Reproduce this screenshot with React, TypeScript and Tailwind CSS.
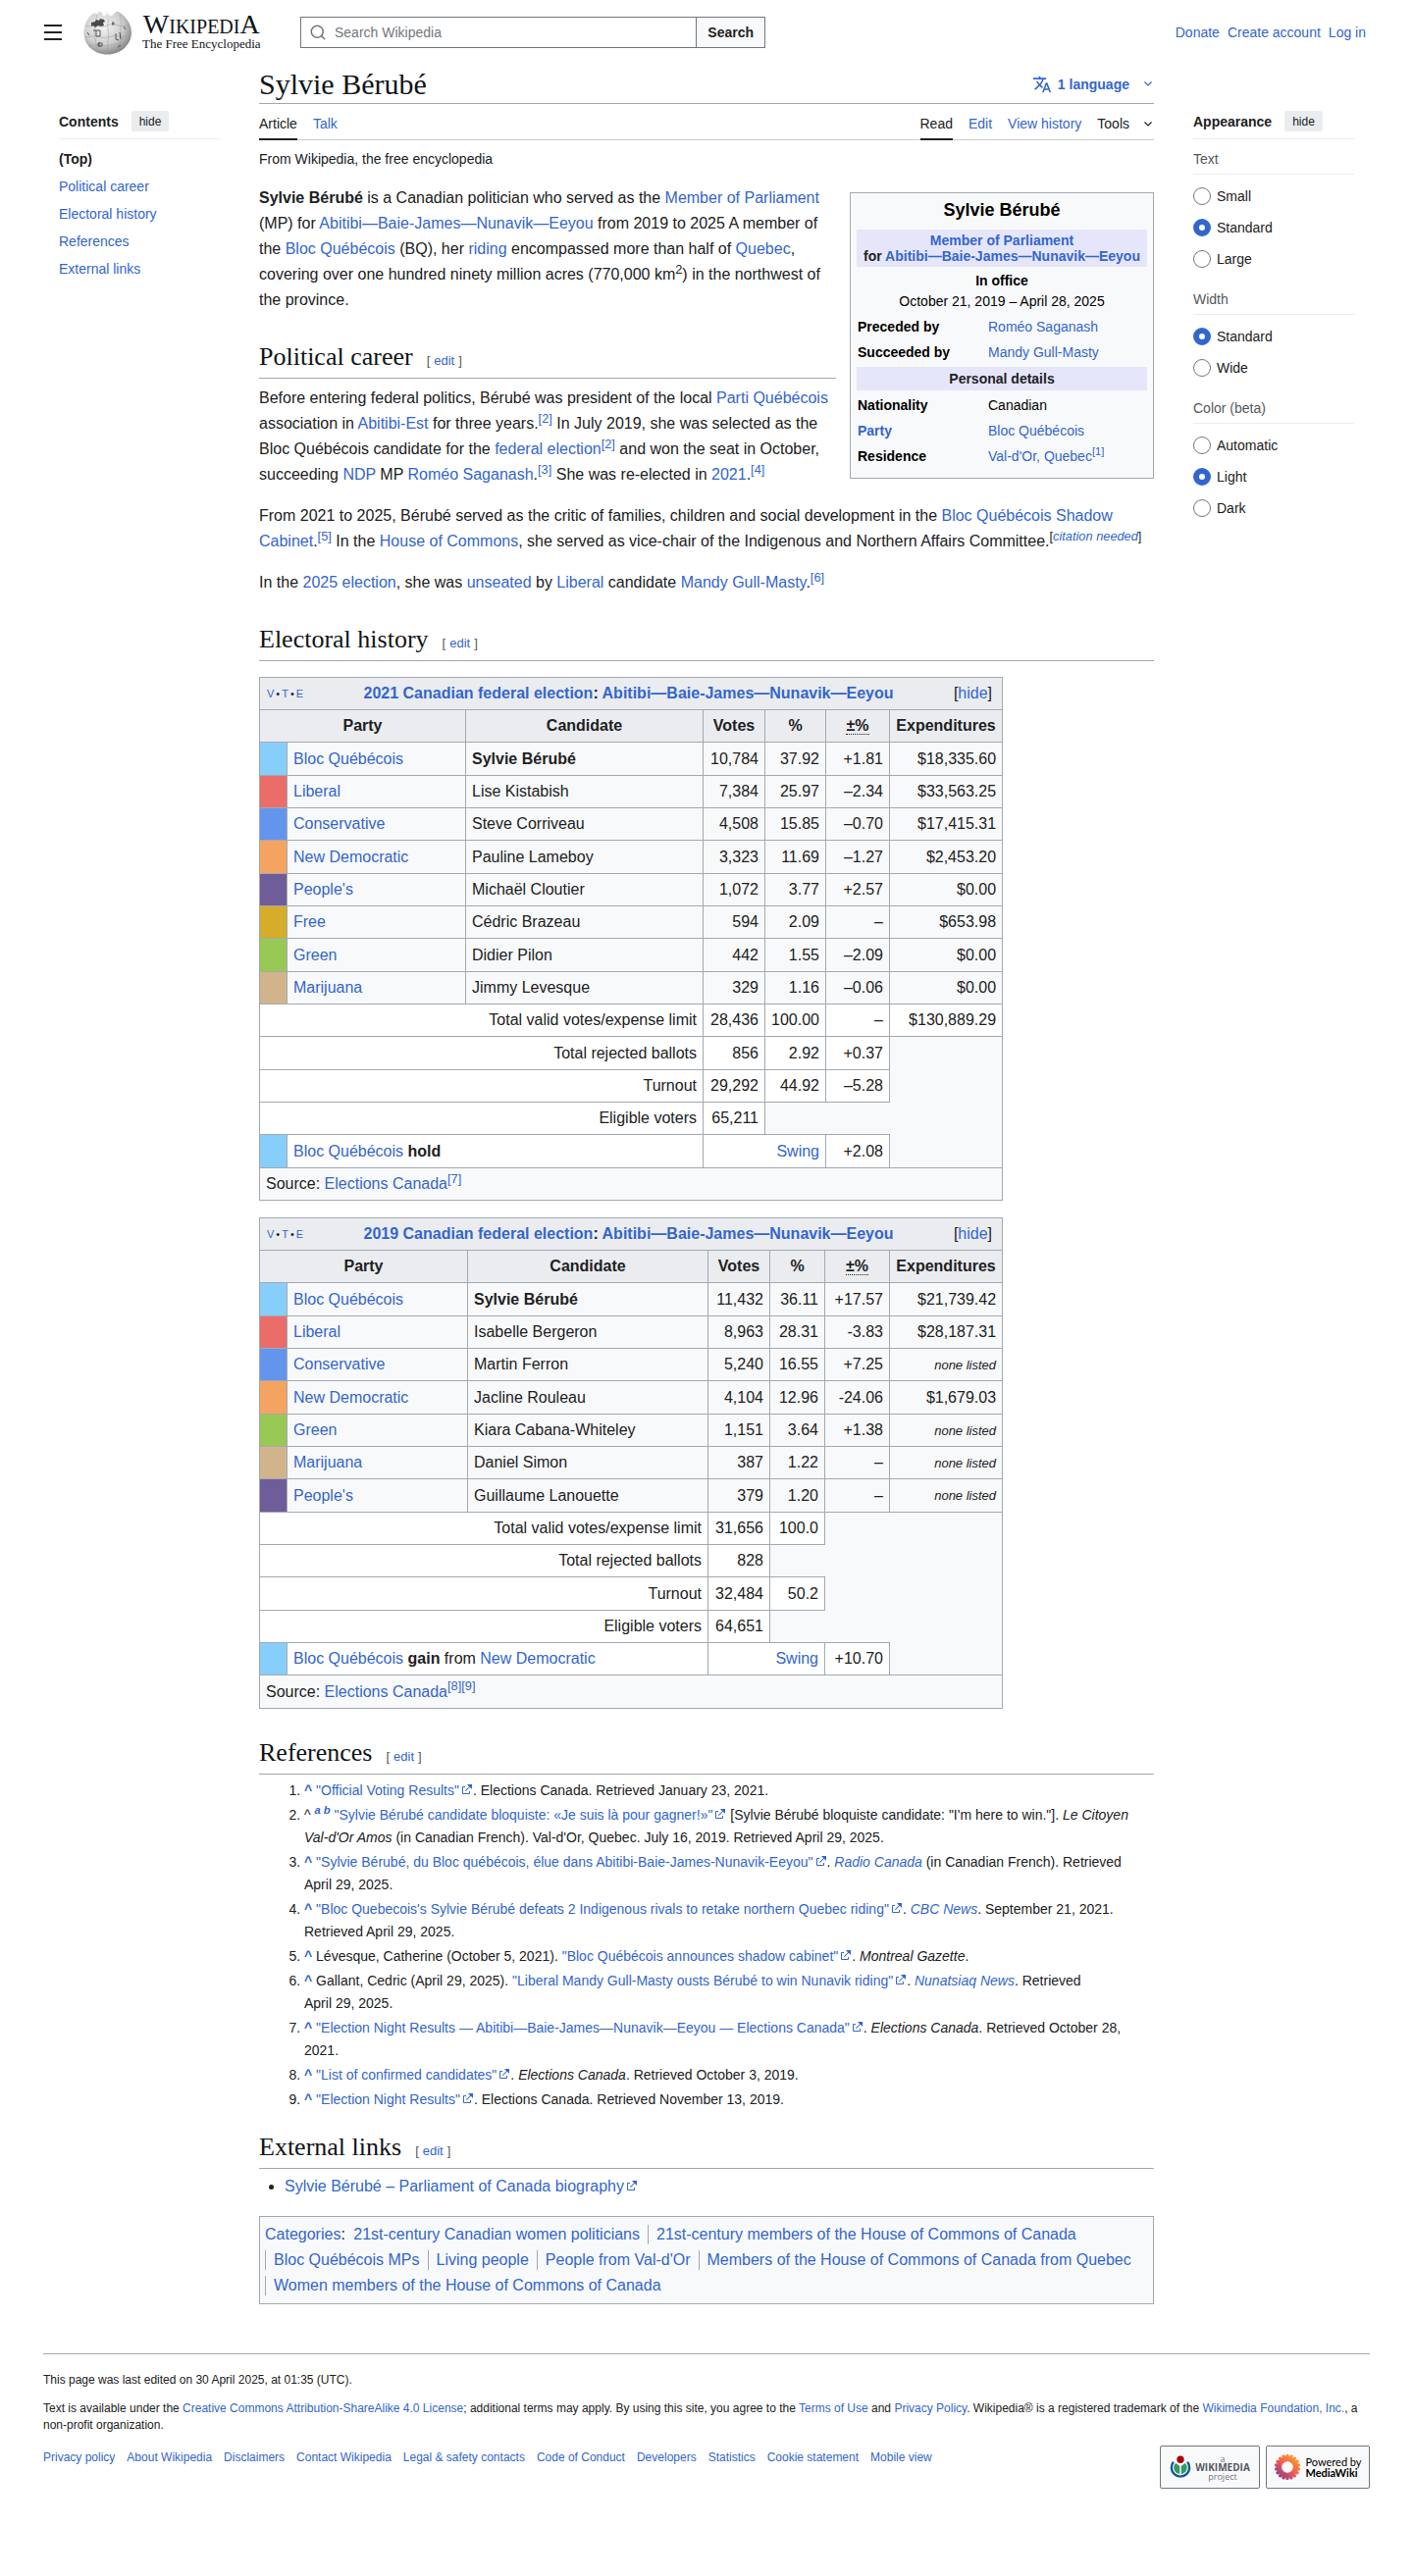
import type { ReactNode } from "react"
import { Search } from "lucide-react"
import { MdTranslate } from "react-icons/md"

type Row = {
  color: string
  party: string
  candidate: string
  votes: string
  pct: string
  change: string
  spent: string
}

type Summary = { label: string; votes: string; pct?: string; change?: string; spent?: string }

const results2021: Row[] = [
  { color: "bg-[#87cefa]", party: "Bloc Québécois", candidate: "Sylvie Bérubé", votes: "10,784", pct: "37.92", change: "+1.81", spent: "$18,335.60" },
  { color: "bg-[#ea6d6a]", party: "Liberal", candidate: "Lise Kistabish", votes: "7,384", pct: "25.97", change: "–2.34", spent: "$33,563.25" },
  { color: "bg-[#6495ed]", party: "Conservative", candidate: "Steve Corriveau", votes: "4,508", pct: "15.85", change: "–0.70", spent: "$17,415.31" },
  { color: "bg-[#f4a460]", party: "New Democratic", candidate: "Pauline Lameboy", votes: "3,323", pct: "11.69", change: "–1.27", spent: "$2,453.20" },
  { color: "bg-[#6f5d9a]", party: "People's", candidate: "Michaël Cloutier", votes: "1,072", pct: "3.77", change: "+2.57", spent: "$0.00" },
  { color: "bg-[#d6ac2b]", party: "Free", candidate: "Cédric Brazeau", votes: "594", pct: "2.09", change: "–", spent: "$653.98" },
  { color: "bg-[#99c955]", party: "Green", candidate: "Didier Pilon", votes: "442", pct: "1.55", change: "–2.09", spent: "$0.00" },
  { color: "bg-[#d2b48c]", party: "Marijuana", candidate: "Jimmy Levesque", votes: "329", pct: "1.16", change: "–0.06", spent: "$0.00" },
]

const summary2021: Summary[] = [
  { label: "Total valid votes/expense limit", votes: "28,436", pct: "100.00", change: "–", spent: "$130,889.29" },
  { label: "Total rejected ballots", votes: "856", pct: "2.92", change: "+0.37" },
  { label: "Turnout", votes: "29,292", pct: "44.92", change: "–5.28" },
  { label: "Eligible voters", votes: "65,211" },
]

const results2019: Row[] = [
  { color: "bg-[#87cefa]", party: "Bloc Québécois", candidate: "Sylvie Bérubé", votes: "11,432", pct: "36.11", change: "+17.57", spent: "$21,739.42" },
  { color: "bg-[#ea6d6a]", party: "Liberal", candidate: "Isabelle Bergeron", votes: "8,963", pct: "28.31", change: "-3.83", spent: "$28,187.31" },
  { color: "bg-[#6495ed]", party: "Conservative", candidate: "Martin Ferron", votes: "5,240", pct: "16.55", change: "+7.25", spent: "none listed" },
  { color: "bg-[#f4a460]", party: "New Democratic", candidate: "Jacline Rouleau", votes: "4,104", pct: "12.96", change: "-24.06", spent: "$1,679.03" },
  { color: "bg-[#99c955]", party: "Green", candidate: "Kiara Cabana-Whiteley", votes: "1,151", pct: "3.64", change: "+1.38", spent: "none listed" },
  { color: "bg-[#d2b48c]", party: "Marijuana", candidate: "Daniel Simon", votes: "387", pct: "1.22", change: "–", spent: "none listed" },
  { color: "bg-[#6f5d9a]", party: "People's", candidate: "Guillaume Lanouette", votes: "379", pct: "1.20", change: "–", spent: "none listed" },
]

const summary2019: Summary[] = [
  { label: "Total valid votes/expense limit", votes: "31,656", pct: "100.0" },
  { label: "Total rejected ballots", votes: "828" },
  { label: "Turnout", votes: "32,484", pct: "50.2" },
  { label: "Eligible voters", votes: "64,651" },
]

const categories = [
  "21st-century Canadian women politicians",
  "21st-century members of the House of Commons of Canada",
  "Bloc Québécois MPs",
  "Living people",
  "People from Val-d'Or",
  "Members of the House of Commons of Canada from Quebec",
  "Women members of the House of Commons of Canada",
]

const footerLinks = [
  "Privacy policy", "About Wikipedia", "Disclaimers", "Contact Wikipedia", "Legal & safety contacts",
  "Code of Conduct", "Developers", "Statistics", "Cookie statement", "Mobile view",
]

const appearance = [
  { title: "Text", name: "text", options: ["Small", "Standard", "Large"], value: "Standard" },
  { title: "Width", name: "width", options: ["Standard", "Wide"], value: "Standard" },
  { title: "Color (beta)", name: "color", options: ["Automatic", "Light", "Dark"], value: "Light" },
]

function A({ children, className = "" }: { children: ReactNode; className?: string }) {
  return <a href="#" className={`text-[#3366cc] hover:underline ${className}`}>{children}</a>
}

function Ref({ n }: { n: number | string }) {
  return (
    <sup className="align-super text-[80%] leading-none top-0">
      <A>[{n}]</A>
    </sup>
  )
}

function ExternalIcon() {
  return (
    <svg viewBox="0 0 12 12" className="inline-block size-3 ml-0.5 align-baseline fill-[#3366cc]" aria-hidden="true">
      <path d="M6 1h5v5L8.86 3.85 4.7 8 4 7.3l4.15-4.16zM2 3h2v1H2v6h6V8h1v2a1 1 0 0 1-1 1H2a1 1 0 0 1-1-1V4a1 1 0 0 1 1-1" />
    </svg>
  )
}

function Ext({ children }: { children: ReactNode }) {
  return <A>{children}<ExternalIcon /></A>
}

function Back() {
  return <A className="font-bold">^</A>
}

function Chevron({ className = "" }: { className?: string }) {
  return (
    <svg viewBox="0 0 8 5" className={`w-2 h-[5px] fill-none stroke-current ${className}`} aria-hidden="true">
      <path d="M0.5 0.5 4 4 7.5 0.5" strokeWidth="1.2" />
    </svg>
  )
}

function Heading({ children, className = "mt-[27px]" }: { children: ReactNode; className?: string }) {
  return (
    <div className={`flow-root ${className}`}>
      <div className="flex items-baseline gap-[14px] pb-[3px] border-b border-[#a2a9b1]">
        <h2 className="font-['Liberation_Serif',serif] text-[26px] leading-9 text-[#101418]">{children}</h2>
        <span className="flex gap-1 text-[13px] text-[#54595d]">[<A>edit</A>]</span>
      </div>
    </div>
  )
}

function Logo() {
  return (
    <a href="#" className="flex items-center gap-[10px]" aria-label="Wikipedia">
      <svg viewBox="0 0 50 46" className="w-[50px] h-[46px]" aria-hidden="true">
        <defs>
          <radialGradient id="globe" cx="0.4" cy="0.35" r="0.75">
            <stop offset="0" stopColor="#f4f4f4" />
            <stop offset="0.55" stopColor="#cfcfcf" />
            <stop offset="1" stopColor="#6d6d6d" />
          </radialGradient>
        </defs>
        <path
          fill="url(#globe)"
          d="M8 5.5 11 3l3 1.5 2-2.5 3 1 1 3 3-.5 1-3 2 3 3 .5 3-3 2.500-1.500 3 1.500C43 7 49 14 49 23c0 12.500-11 22.500-24.500 22.500S.5 36 .5 23.500C.5 16 3 9.500 8 5.500z"
        />
        <g fill="none" stroke="#9b9b9b" strokeWidth="0.5">
          <path d="M3 16c4 2 7-1 11 0s6 2 10 0 8-1 12 0 7 1 11-1" />
          <path d="M1 27c5 2 8-1 13 0s7 2 11 1 8-2 12-1 7 1 11-1" />
          <path d="M5 36c5 1 8-1 12 0s6 1 10 0 8-1 11 0 4 0 6-1" />
          <path d="M14 5c-2 5-1 8-2 12s-1 8 0 13 1 8 3 13" />
          <path d="M25 9c1 4-1 7 0 11s1 7 0 12 0 8 0 13" />
          <path d="M37 5c1 5 2 8 1 12s1 8 0 13-1 7-3 11" />
        </g>
        <path fill="#4a4a4a" d="M8 13l4-1 1-2 3 1 1-2 4 1 1 2-2 1 1 3-3 1-3-1-3 2-2-2-2 1z" />
        <g fill="none" stroke="#555" strokeWidth="1">
          <path d="M12 21h5v6h-4v-6M10 21h2" />
          <path d="M33 24v6l3 1M37 23l1 7" />
          <path d="M15 34h4v3h-4zM16 33v5" />
          <path d="M29 14h3M30 12v4M41 17l2 3M4 23l2 3" />
          <path d="M35 38l3-2" />
        </g>
      </svg>
      <span className="flex flex-col items-center font-['Liberation_Serif',serif] text-[#101418]">
        <span className="text-[28px] leading-[21px]">W<span className="text-[20px]">IKIPEDI</span>A</span>
        <span className="text-[13px] leading-[14px]">The Free Encyclopedia</span>
      </span>
    </a>
  )
}

function Header() {
  return (
    <header className="flex items-center h-[66px] px-11 text-sm">
      <button aria-label="Main menu" className="flex flex-col gap-[5px] w-5 px-px">
        <span className="h-0.5 bg-[#202122]" />
        <span className="h-0.5 bg-[#202122]" />
        <span className="h-0.5 bg-[#202122]" />
      </button>
      <div className="w-[242px] pl-[21px]">
        <Logo />
      </div>
      <form className="flex w-[474px] h-8" onSubmit={(e) => e.preventDefault()}>
        <label className="flex flex-1 items-center gap-2 pl-2 border border-[#72777d]">
          <Search className="size-[18px] text-[#72777d]" strokeWidth={2} />
          <input type="search" aria-label="Search Wikipedia" placeholder="Search Wikipedia" className="flex-1 outline-none placeholder:text-[#72777d]" />
        </label>
        <button className="-ml-px px-[11px] border border-[#72777d] bg-[#f8f9fa] font-bold">Search</button>
      </form>
      <nav className="flex gap-2 ml-auto pr-1">
        <A>Donate</A>
        <A>Create account</A>
        <A>Log in</A>
      </nav>
    </header>
  )
}

function PanelTitle({ children }: { children: ReactNode }) {
  return (
    <div className="flex items-center gap-[13px] h-9 border-b border-[#eaecf0]">
      <h2 className="font-bold">{children}</h2>
      <button className="h-[21px] px-2 rounded-xs bg-[#eaecf0] text-xs">hide</button>
    </div>
  )
}

function Contents() {
  return (
    <nav className="pt-10 pl-4 text-sm">
      <PanelTitle>Contents</PanelTitle>
      <ul className="pt-[6px] leading-7">
        <li><a href="#" className="font-bold">(Top)</a></li>
        <li><A>Political career</A></li>
        <li><A>Electoral history</A></li>
        <li><A>References</A></li>
        <li><A>External links</A></li>
      </ul>
    </nav>
  )
}

function Appearance() {
  return (
    <aside className="pt-10 pr-4 text-sm">
      <PanelTitle>Appearance</PanelTitle>
      {appearance.map((group) => (
        <div key={group.name} role="radiogroup" aria-labelledby={`${group.name}-title`} className="pt-[9px] pb-[5px]">
          <h3 id={`${group.name}-title`} className="pb-1 border-b border-[#eaecf0] leading-[22px] text-[#54595d]">{group.title}</h3>
          <div className="pt-[6px]">
            {group.options.map((option) => (
              <label key={option} className="flex items-center gap-[6px] h-8">
                <input
                  type="radio"
                  name={group.name}
                  defaultChecked={option === group.value}
                  className="appearance-none size-[18px] rounded-full border border-[#72777d] bg-white checked:border-[6px] checked:border-[#3366cc]"
                />
                {option}
              </label>
            ))}
          </div>
        </div>
      ))}
    </aside>
  )
}

function Infobox() {
  const label = "w-[134px] pl-[1px] text-left font-bold"
  return (
    <div className="float-right w-[310px] mt-[7px] ml-[14px] mb-[7px] px-[6px] pt-[6px] pb-[9px] border border-[#a2a9b1] bg-[#f8f9fa] text-sm leading-[26px] text-black">
      <table className="w-full">
        <tbody>
          <tr><th colSpan={2} className="pb-[9px] text-lg leading-[22px]">Sylvie Bérubé</th></tr>
          <tr>
            <th colSpan={2} className="py-[3px] bg-[#e6e6fa] leading-4 text-[#202122]">
              <A>Member of Parliament</A><br />for <A>Abitibi—Baie-James—Nunavik—Eeyou</A>
            </th>
          </tr>
          <tr>
            <td colSpan={2} className="pt-1 pb-0.5 text-center leading-[21px]">
              <b>In office</b><br />October 21, 2019 – April 28, 2025
            </td>
          </tr>
          <tr><th className={label}>Preceded by</th><td><A>Roméo Saganash</A></td></tr>
          <tr><th className={label}>Succeeded by</th><td><A>Mandy Gull-Masty</A></td></tr>
          <tr>
            <th colSpan={2} className="py-0.5">
              <div className="bg-[#e6e6fa] leading-6 text-[#202122]">Personal details</div>
            </th>
          </tr>
          <tr><th className={label}>Nationality</th><td>Canadian</td></tr>
          <tr><th className={label}><A>Party</A></th><td><A>Bloc Québécois</A></td></tr>
          <tr><th className={label}>Residence</th><td><A>Val-d'Or, Quebec</A><Ref n={1} /></td></tr>
        </tbody>
      </table>
    </div>
  )
}

type ElectionProps = {
  year: string
  cols: string[]
  rows: Row[]
  summary: Summary[]
  outcome: ReactNode
  swing: string
  sources: number[]
}

function ElectionTable({ year, cols, rows, summary, outcome, swing, sources }: ElectionProps) {
  const cell = "px-[6px] border border-[#a2a9b1]"
  const num = `${cell} text-right`
  return (
    <table className="table-fixed border-collapse w-full max-w-[758px] border border-[#a2a9b1] bg-[#f8f9fa] leading-[26px] [&_tr]:h-[33px] [&_tr:nth-child(3n)]:h-[34px]">
      <colgroup>
        {cols.map((c, i) => <col key={i} className={c} />)}
      </colgroup>
      <tbody>
        <tr className="bg-[#eaecf0]">
          <th colSpan={7} className={cell}>
            <div className="flex items-center">
              <span className="flex items-center gap-0.5 pl-px text-[11px] leading-4 font-normal">
                <A>V</A><span>•</span><A>T</A><span>•</span><A>E</A>
              </span>
              <span className="flex-1 text-center">
                <A>{year} Canadian federal election</A>: <A>Abitibi—Baie-James—Nunavik—Eeyou</A>
              </span>
              <span className="pr-1 font-normal">[<button className="text-[#3366cc]">hide</button>]</span>
            </div>
          </th>
        </tr>
        <tr className="bg-[#eaecf0]">
          <th colSpan={2} className={cell}>Party</th>
          <th className={cell}>Candidate</th>
          <th className={cell}>Votes</th>
          <th className={cell}>%</th>
          <th className={cell}><abbr title="Change" className="no-underline border-b border-dotted border-[#202122]">±%</abbr></th>
          <th className={cell}>Expenditures</th>
        </tr>
        {rows.map((r, i) => (
          <tr key={r.party}>
            <td className={`border border-[#a2a9b1] ${r.color}`} />
            <td className={cell}><A>{r.party}</A></td>
            <td className={cell}>{i === 0 ? <b>{r.candidate}</b> : r.candidate}</td>
            <td className={num}>{r.votes}</td>
            <td className={num}>{r.pct}</td>
            <td className={num}>{r.change}</td>
            <td className={num}>{r.spent.startsWith("$") ? r.spent : <i className="text-[13px]">{r.spent}</i>}</td>
          </tr>
        ))}
        {summary.map((s) => (
          <tr key={s.label}>
            <td colSpan={3} className={`${num} bg-white`}>{s.label}</td>
            <td className={`${num} bg-white`}>{s.votes}</td>
            {s.pct && <td className={`${num} bg-white`}>{s.pct}</td>}
            {s.change && <td className={`${num} bg-white`}>{s.change}</td>}
            {s.spent && <td className={`${num} bg-white`}>{s.spent}</td>}
          </tr>
        ))}
        <tr>
          <td className="border border-[#a2a9b1] bg-[#87cefa]" />
          <td colSpan={2} className={`${cell} bg-white`}>{outcome}</td>
          <td colSpan={2} className={`${num} bg-white`}><A>Swing</A></td>
          <td className={`${num} bg-white`}>{swing}</td>
        </tr>
        <tr>
          <td colSpan={7} className={cell}>
            Source: <A>Elections Canada</A>{sources.map((n) => <Ref key={n} n={n} />)}
          </td>
        </tr>
      </tbody>
    </table>
  )
}

function References() {
  return (
    <ol className="list-decimal pt-[5px] pl-[46px] text-sm leading-[23px] [&>li]:mb-0.5">
      <li><Back /> <Ext>"Official Voting Results"</Ext>. Elections Canada. Retrieved January 23, 2021.</li>
      <li>
        ^ <sup className="text-[80%] leading-none font-bold italic"><A>a</A> <A>b</A></sup> <Ext>"Sylvie Bérubé candidate bloquiste: «Je suis là pour gagner!»"</Ext> [Sylvie Bérubé bloquiste candidate: "I'm here to win."]. <i>Le Citoyen <span className="whitespace-nowrap">Val-d'Or Amos</span></i> (in Canadian French). Val-d'Or, Quebec. July 16, 2019. Retrieved April 29, 2025.
      </li>
      <li>
        <Back /> <Ext>"Sylvie Bérubé, du Bloc québécois, élue dans Abitibi-Baie-James-Nunavik-Eeyou"</Ext>. <i><A>Radio Canada</A></i> (in Canadian French). Retrieved <span className="whitespace-nowrap">April 29, 2025.</span>
      </li>
      <li>
        <Back /> <Ext>"Bloc Quebecois's Sylvie Bérubé defeats 2 Indigenous rivals to retake northern Quebec riding"</Ext>. <i><A>CBC News</A></i>. September 21, 2021. Retrieved April 29, 2025.
      </li>
      <li><Back /> Lévesque, Catherine (October 5, 2021). <Ext>"Bloc Québécois announces shadow cabinet"</Ext>. <i>Montreal Gazette</i>.</li>
      <li>
        <Back /> Gallant, Cedric (April 29, 2025). <Ext>"Liberal Mandy Gull-Masty ousts Bérubé to win Nunavik riding"</Ext>. <i><A>Nunatsiaq News</A></i>. Retrieved <span className="whitespace-nowrap">April 29, 2025.</span>
      </li>
      <li>
        <Back /> <Ext>"Election Night Results — Abitibi—Baie-James—Nunavik—Eeyou — Elections Canada"</Ext>. <i>Elections Canada</i>. Retrieved October 28,<br />2021.
      </li>
      <li><Back /> <Ext>"List of confirmed candidates"</Ext>. <i>Elections Canada</i>. Retrieved October 3, 2019.</li>
      <li><Back /> <Ext>"Election Night Results"</Ext>. Elections Canada. Retrieved November 13, 2019.</li>
    </ol>
  )
}

function Article() {
  return (
    <main className="min-w-0">
      <div className="flex items-center justify-between h-10 border-b border-[#a2a9b1]">
        <h1 className="font-['Liberation_Serif',serif] text-[30px] leading-[38px] text-[#101418]">Sylvie Bérubé</h1>
        <button className="flex items-center pr-0.5 text-sm font-bold text-[#3366cc]">
          <MdTranslate className="size-5 mr-[6px]" />
          1 language
          <Chevron className="ml-[15px]" />
        </button>
      </div>
      <div className="flex justify-between border-b border-[#c8ccd1] text-sm leading-[22px]">
        <nav className="flex gap-4 -mb-px">
          <a href="#" className="pt-[9px] pb-1 border-b-2 border-[#202122]">Article</a>
          <A className="pt-[9px]">Talk</A>
        </nav>
        <nav className="flex gap-4 -mb-px">
          <a href="#" className="pt-[9px] pb-1 border-b-2 border-[#202122]">Read</a>
          <A className="pt-[9px]">Edit</A>
          <A className="pt-[9px]">View history</A>
          <button className="flex items-center gap-[15px] pt-[3px] pr-0.5">Tools<Chevron /></button>
        </nav>
      </div>
      <p className="pt-2 text-sm leading-[22px]">From Wikipedia, the free encyclopedia</p>

      <div className="pt-4 leading-[26px]">
        <Infobox />
        <p>
          <b>Sylvie Bérubé</b> is a Canadian politician who served as the <A>Member of Parliament</A> (MP) for <A>Abitibi—Baie-James—Nunavik—Eeyou</A> from 2019 to 2025 A member of the <A>Bloc Québécois</A> (BQ), her <A>riding</A> encompassed more than half of <A>Quebec</A>, covering over one hundred ninety million acres (770,000 km<sup className="text-[80%] leading-none">2</sup>) in the northwest of the province.
        </p>
        <Heading>Political career</Heading>
        <p className="mt-[7px]">
          Before entering federal politics, Bérubé was president of the local <A>Parti Québécois</A> association in <A>Abitibi-Est</A> for three years.<Ref n={2} /> In July 2019, she was selected as the Bloc Québécois candidate for the <A>federal election</A><Ref n={2} /> and won the seat in October, succeeding <A>NDP</A> MP <A>Roméo Saganash</A>.<Ref n={3} /> She was re-elected in <A>2021</A>.<Ref n={4} />
        </p>
        <p className="mt-4">
          From 2021 to 2025, Bérubé served as the critic of families, children and social development in the <A>Bloc Québécois Shadow Cabinet</A>.<Ref n={5} /> In the <A>House of Commons</A>, she served as vice-chair of the Indigenous and Northern Affairs Committee.<sup className="text-[80%] leading-none whitespace-nowrap">[<i><A>citation needed</A></i>]</sup>
        </p>
        <p className="mt-4">
          In the <A>2025 election</A>, she was <A>unseated</A> by <A>Liberal</A> candidate <A>Mandy Gull-Masty</A>.<Ref n={6} />
        </p>

        <Heading>Electoral history</Heading>
        <div className="flex flex-col gap-[17px] pt-4">
          <ElectionTable
            year="2021"
            cols={["w-[28px]", "w-[182px]", "w-[242px]", "w-[63px]", "w-[62px]", "w-[65px]", "w-[115px]"]}
            rows={results2021}
            summary={summary2021}
            outcome={<><A>Bloc Québécois</A> <b>hold</b></>}
            swing="+2.08"
            sources={[7]}
          />
          <ElectionTable
            year="2019"
            cols={["w-[28px]", "w-[184px]", "w-[245px]", "w-[63px]", "w-[56px]", "w-[66px]", "w-[115px]"]}
            rows={results2019}
            summary={summary2019}
            outcome={<><A>Bloc Québécois</A> <b>gain</b> from <A>New Democratic</A></>}
            swing="+10.70"
            sources={[8, 9]}
          />
        </div>

        <Heading>References</Heading>
        <References />

        <Heading className="mt-[19px]">External links</Heading>
        <ul className="list-disc pt-[5px] pl-[26px]">
          <li><Ext>Sylvie Bérubé – Parliament of Canada biography</Ext></li>
        </ul>

        <div className="mt-[17px] p-[5px] border border-[#a2a9b1] bg-[#f8f9fa]">
          <A>Categories</A>:{" "}
          <ul className="inline">
            {categories.map((c, i) => (
              <li key={c} className={`inline-block leading-5 pr-2 ${i === 0 ? "pl-1" : "pl-2 border-l border-[#a2a9b1]"}`}><A>{c}</A></li>
            ))}
          </ul>
        </div>
      </div>
    </main>
  )
}

function WikimediaBadge() {
  return (
    <a href="#" className="flex items-center justify-center gap-1 w-[102px] h-11 rounded-xs border border-[#72777d] bg-[#f8f9fa]">
      <svg viewBox="0 0 24 26" className="w-[22px] h-6" aria-hidden="true">
        <circle cx="12" cy="4.500" r="4" fill="#a00" />
        <path d="M4.200 7.200a10 10 0 1 0 15.600 0" fill="none" stroke="#0c5a8f" strokeWidth="2.600" />
        <path d="M11.200 20.500V12L6.800 8.500a7 7 0 0 0 4.400 12zM12.800 20.500V12l4.400-3.500a7 7 0 0 1-4.400 12z" fill="#396" />
      </svg>
      <span className="flex flex-col items-center font-['Open_Sans',sans-serif] text-[9px] leading-[9px] text-[#72777d]">
        <span>a</span>
        <span className="text-[10px] font-bold text-[#54595d]">WIKIMEDIA</span>
        <span>project</span>
      </span>
    </a>
  )
}

function MediaWikiBadge() {
  const petals = Array.from({ length: 18 }, (_, i) => i * 20)
  return (
    <a href="#" className="flex items-center justify-center gap-1 w-[106px] h-11 rounded-xs border border-[#72777d] bg-[#f8f9fa]">
      <svg viewBox="0 0 28 28" className="size-7" aria-hidden="true">
        <defs>
          <linearGradient id="petal" x1="22" y1="4" x2="5" y2="24" gradientUnits="userSpaceOnUse">
            <stop offset="0" stopColor="#fc9a2b" />
            <stop offset="0.5" stopColor="#f25b50" />
            <stop offset="1" stopColor="#8d3a90" />
          </linearGradient>
          <mask id="petals">
            <circle cx="14" cy="14" r="11" fill="#fff" />
            {petals.map((a) => <circle key={a} cx="14" cy="2.500" r="1.700" fill="#fff" transform={`rotate(${a} 14 14)`} />)}
            <circle cx="14" cy="14" r="5.800" fill="#000" />
          </mask>
        </defs>
        <rect width="28" height="28" fill="url(#petal)" mask="url(#petals)" />
      </svg>
      <span className="font-[Lato,sans-serif] text-[11px] leading-[11px] text-black">
        Powered by<br /><b>MediaWiki</b>
      </span>
    </a>
  )
}

function Footer() {
  return (
    <footer className="mx-11 mt-[50px] pt-[18px] pb-20 border-t border-[#a2a9b1] text-xs leading-[17px]">
      <p>This page was last edited on 30 April 2025, at 01:35 (UTC).</p>
      <p className="mt-3">
        Text is available under the <A>Creative Commons Attribution-ShareAlike 4.0 License</A>; additional terms may apply. By using this site, you agree to the <A>Terms of Use</A> and <A>Privacy Policy</A>. Wikipedia® is a registered trademark of the <A>Wikimedia Foundation, Inc.</A>, a non-profit organization.
      </p>
      <div className="flex items-start justify-between mt-3">
        <ul className="flex flex-wrap gap-x-3 pt-1">
          {footerLinks.map((l) => <li key={l}><A>{l}</A></li>)}
        </ul>
        <div className="flex gap-[6px]">
          <WikimediaBadge />
          <MediaWikiBadge />
        </div>
      </div>
    </footer>
  )
}

export default function App() {
  return (
    <div className="min-h-screen bg-white font-['Liberation_Sans',Arial,sans-serif] text-base text-[#202122]">
      <Header />
      <div className="grid grid-cols-[180px_1fr_180px] gap-10 px-11">
        <Contents />
        <Article />
        <Appearance />
      </div>
      <Footer />
    </div>
  )
}
